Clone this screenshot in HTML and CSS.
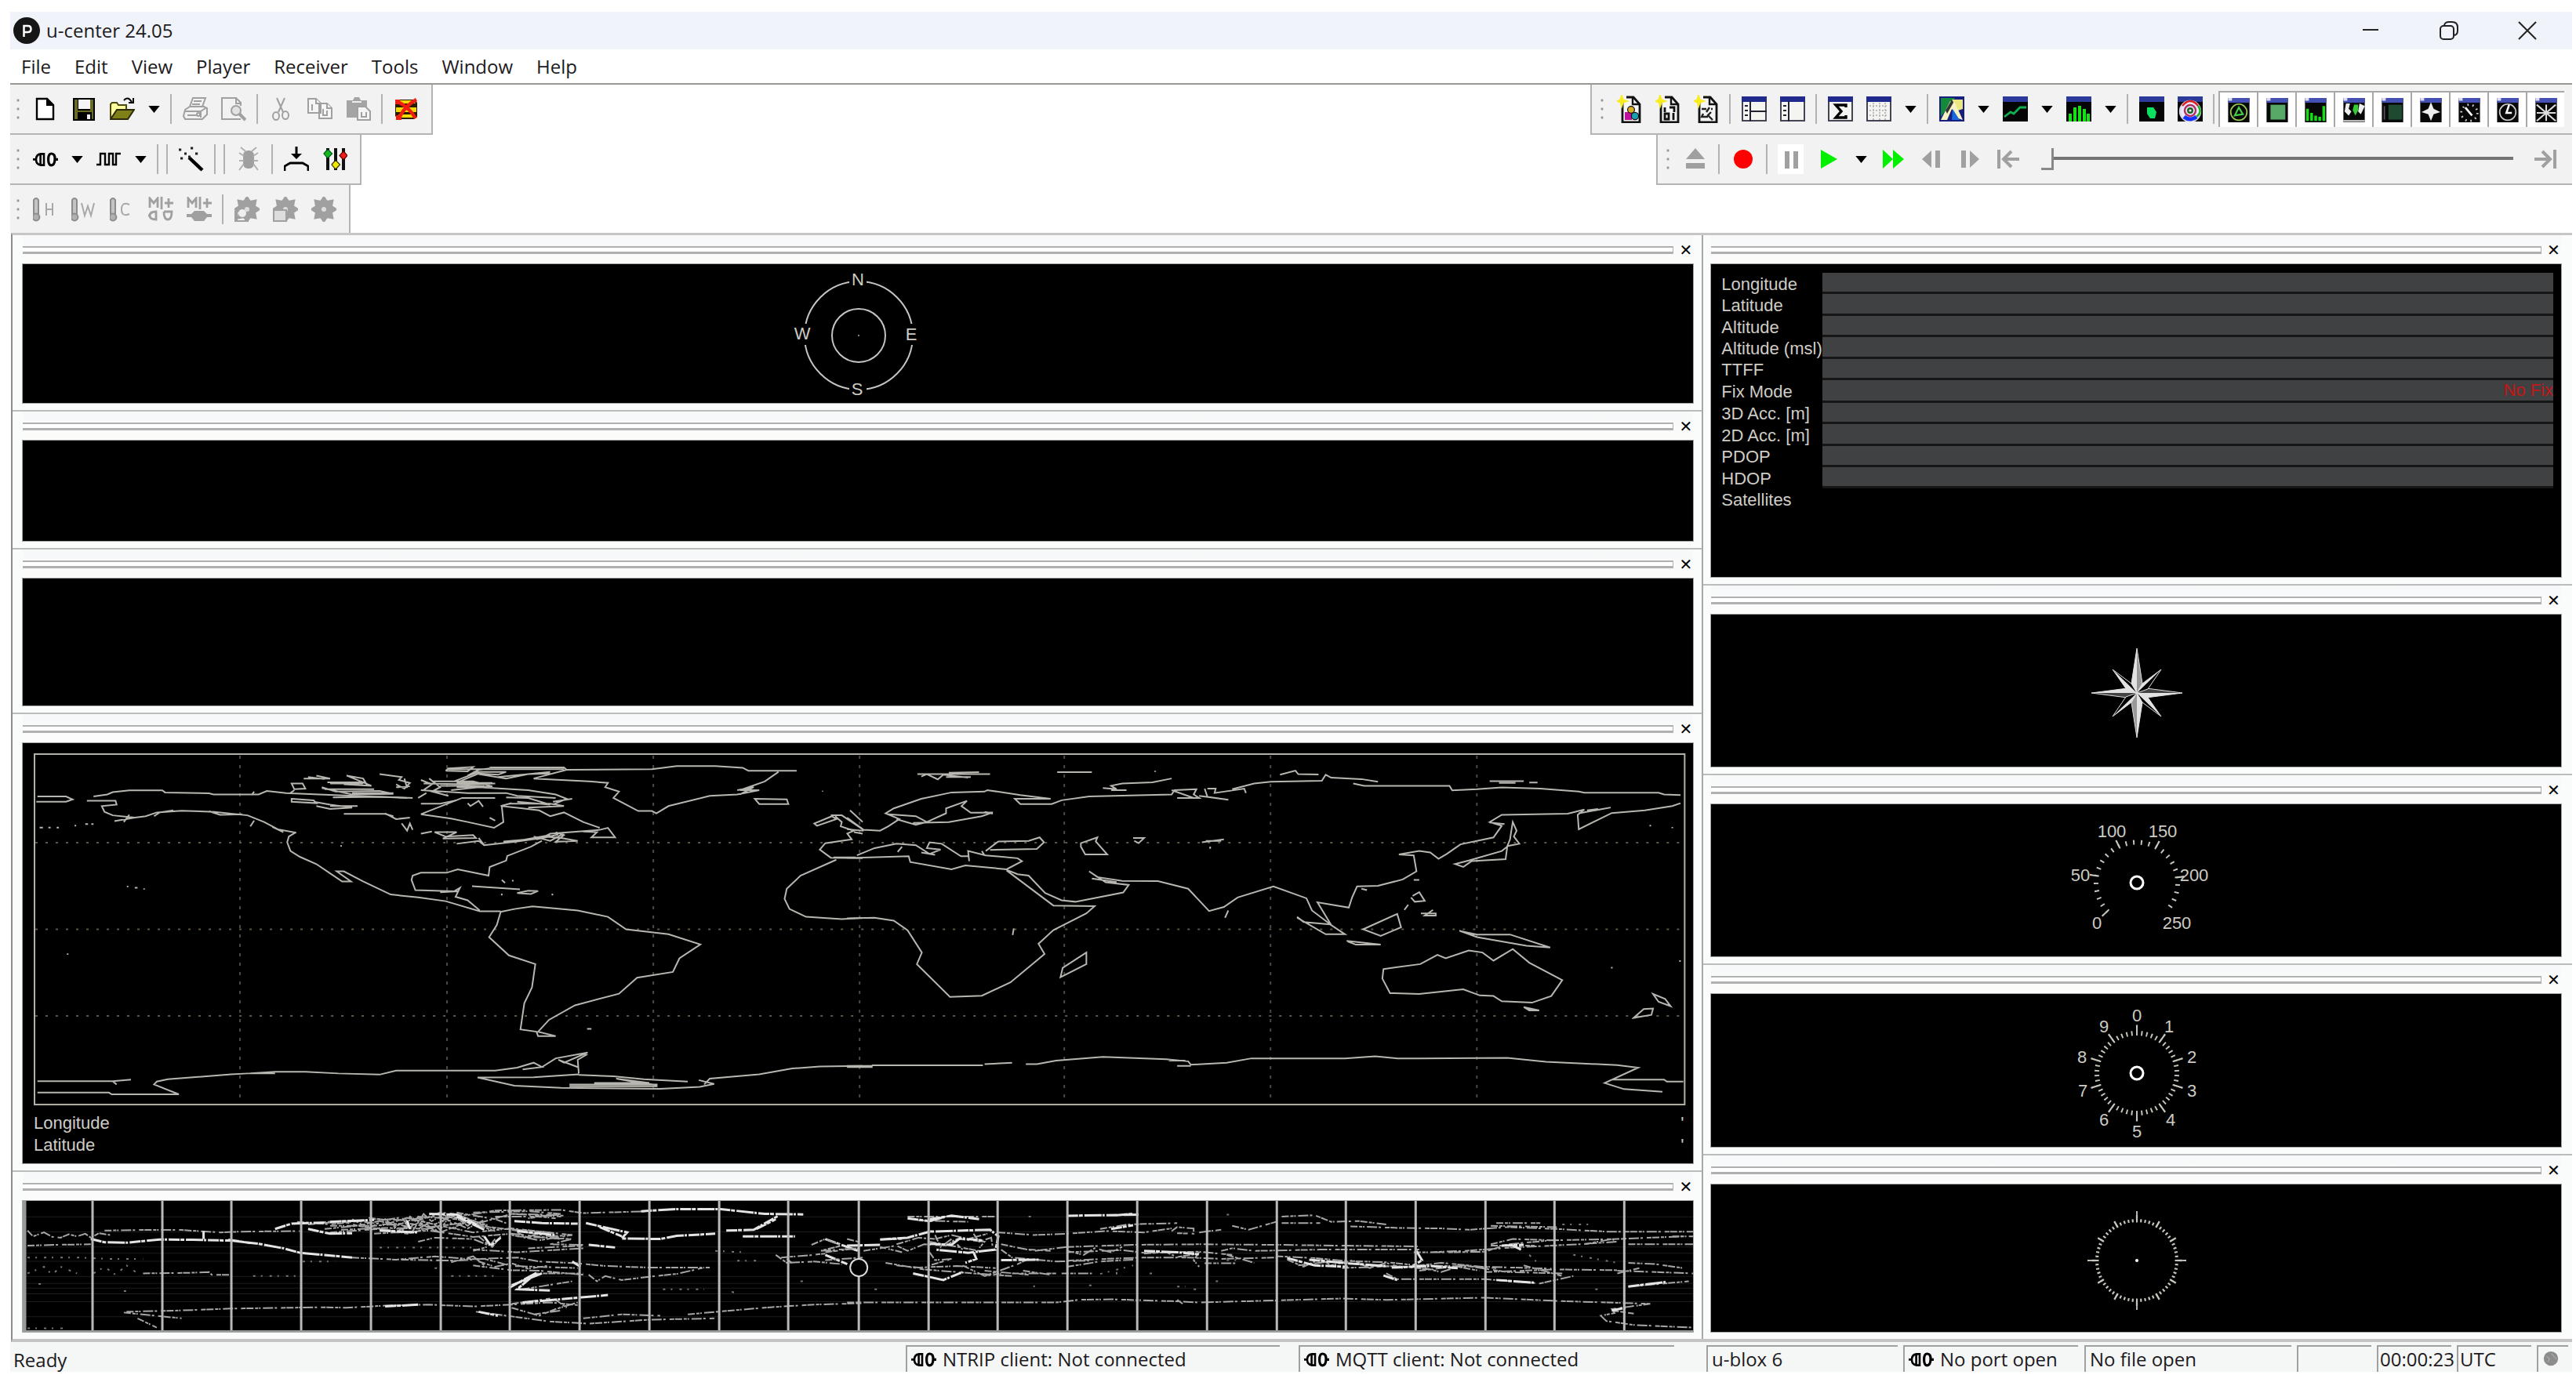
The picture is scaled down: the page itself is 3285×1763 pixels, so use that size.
FILE: index.html
```html
<!DOCTYPE html>
<html lang="en">
<head>
<meta charset="utf-8">
<title>u-center 24.05</title>
<link rel="stylesheet" href="styles.css">
</head>
<body>
<svg class="sprite" aria-hidden="true">
  <symbol id="i-new" viewBox="0 0 16 16"><path d="M2.500 1.500h6.500l4 4v9h-10.500z" fill="#fff" stroke="#000" stroke-width="1.200"/><path d="M9 1.500v4h4" fill="#000" stroke="#000"/></symbol>
  <symbol id="i-save" viewBox="0 0 16 16"><path d="M1 1h14v14.500H1z" fill="#000"/><path d="M2 2h2v7h8V2h2v12.500H2z" fill="#6b6b1e"/><path d="M4.500 2h7.500v6h-7.500z" fill="#f4f4f4"/><path d="M4 10h9v5.500H4z" fill="#000"/><path d="M10 11.500h2v3h-2z" fill="#eee"/></symbol>
  <symbol id="i-open" viewBox="0 0 16 16"><path d="M.5 14V5l1-1h3l1 1.500h5v3" fill="#ffffa0" stroke="#4c4a10"/><path d="M.5 14.500l4-6h11l-4 6z" fill="#808018" stroke="#2c2a08"/><path d="M9 2.500q2.500-3 5 1M15 1v3h-3" fill="none" stroke="#000"/></symbol>
  <symbol id="i-print" viewBox="0 0 16 16"><g fill="none" stroke="#a0a0a0"><path d="M4.500 6.500l2-5.500h8l-2 5.500zM7 3h5M6 5h5M1.500 8.500l3-2h9l2 1v4l-3 3h-11l-1-2zM1.500 9.500h10l3-2M11.500 9.500v4M3 12h6"/><circle cx="10" cy="11.500" r="1"/></g></symbol>
  <symbol id="i-preview" viewBox="0 0 16 16"><path d="M12.500 6V4l-3-3h-9v13.500h12M9.500 1v3.500h3" fill="none" stroke="#a0a0a0"/><circle cx="9.500" cy="9" r="3" fill="#e2e2e2" stroke="#a0a0a0"/><path d="M11.500 11l4 4" stroke="#a0a0a0" stroke-width="2"/></symbol>
  <symbol id="i-cut" viewBox="0 0 16 16"><path d="M5 1l4 9M10 1L6 10" stroke="#a0a0a0" fill="none"/><ellipse cx="4.500" cy="12.500" rx="2" ry="2.500" fill="none" stroke="#a0a0a0"/><ellipse cx="10.500" cy="12" rx="2" ry="2.500" fill="none" stroke="#a0a0a0"/></symbol>
  <symbol id="i-copy" viewBox="0 0 16 16"><g fill="#f6f6f6" stroke="#a0a0a0"><path d="M.5 1.500h5l3 3v6h-8zM7.500 4.500h5l3 3v6.500h-8z"/><path d="M5.500 1.500v3h3M3 5v4M12.500 4.500v3h3M10 8v4h2.500v-3"/></g></symbol>
  <symbol id="i-paste" viewBox="0 0 16 16"><path d="M.5 2.500h4l1-2h3l1 2h4v11H.5z" fill="#a4a4a4"/><path d="M4 3.500h6" stroke="#eee"/><path d="M7.500 6.500h5l3 3v5.500h-8z" fill="#f4f4f4" stroke="#a0a0a0"/><path d="M10 10v3h3v-3" fill="none" stroke="#a0a0a0"/></symbol>
  <symbol id="i-stop" viewBox="0 0 16 16"><path d="M1 4l2-2h10l2 2v9l-2 1.500H3l-2-2z" fill="#2a1c04"/><path d="M3 2.500h9l2 2H2zM1.500 7h13v3h-13zM3 11.500h10v2H3z" fill="#f4d800"/><path d="M2 3q8 4 12 11M14.500 2Q7 6 3 14.500" stroke="#f01c10" stroke-width="2.200" fill="none"/><path d="M1 2h3v3H1zM1.500 12H5v3H1.500z" fill="#f01c10"/></symbol>
  <symbol id="i-plug" viewBox="0 0 16 16"><path d="M7 4v8.500M6.500 4.700H5Q2 5 2 8.200T5 11.800h1.500M4.800 5v6.500M0 8.200h2" fill="none" stroke="#000" stroke-width="1.300"/><path d="M11.800 4.500q-2 0-2 3.700t2 3.700 2.200-3.700-2.200-3.700M14 8.200h2" fill="none" stroke="#000" stroke-width="1.600"/></symbol>
  <symbol id="i-wave" viewBox="0 0 16 16"><path d="M0 11.500h2.500v-7h3v7h2.500v-7h2.500v7h2v-7h3" fill="none" stroke="#000" stroke-width="1.200"/></symbol>
  <symbol id="i-wand" viewBox="0 0 16 16"><path d="M6.500 7l8.500 8" stroke="#000" stroke-width="2.200"/><path d="M0 2h1.600M3.500 4.500H5M7.500 1h1.600M10.500 4.500h1.600M1 7.500h1.600M6 6.500h1.500" stroke="#222" stroke-width="1.500"/></symbol>
  <symbol id="i-bug" viewBox="0 0 16 16"><rect x="4.500" y="2.500" width="7" height="11.500" rx="3" fill="#a0a0a0"/><path d="M6 3L3 .5M10 3l3-2.500M5 6L2 4M5 9H2M5 11l-3 4M11 6l3-2M11 9h3M11 11l3 4" stroke="#b0b0b0" fill="none"/></symbol>
  <symbol id="i-down" viewBox="0 0 16 16"><path d="M8 0v5" stroke="#000" stroke-width="1.500"/><path d="M4.500 4.500h7L8 8z"/><path d="M.5 15.500v-3l3.500-2h8l3.500 2v3" fill="none" stroke="#000" stroke-width="1.400"/></symbol>
  <symbol id="i-sliders" viewBox="0 0 16 16"><path d="M3.500 1v14M8.500 1v14M13.500 1v14" stroke="#111" stroke-width="2"/><path d="M1 4.500l2-2.300h1l2.300 2.300L4 7H3z" fill="#14b81c" stroke="#052" stroke-width=".6"/><path d="M6 11.500l2-2.300h1l2.300 2.300L9 14H8z" fill="#f0e800" stroke="#330" stroke-width=".6"/><path d="M11 5.700l2-2.300h1l2 2.300L14 8h-1z" fill="#ee1c1c" stroke="#500" stroke-width=".6"/></symbol>
  <symbol id="i-th" viewBox="0 0 8 16"><path d="M2.500 11V2q1.500-2 3 0v9" fill="#c4c4c4" stroke="#8c8c8c"/><circle cx="4" cy="13" r="2.200" fill="#b0b0b0" stroke="#8c8c8c"/></symbol>
  <symbol id="i-gear" viewBox="0 0 16 16"><circle cx="8" cy="8" r="5.500" fill="#a0a0a0"/><path d="M8 0l2 3H6zM8 16l2-3H6zM0 8l3-2v4zM16 8l-3-2v4zM2.300 2.300l3.500.7L3 6zM13.700 2.300l-3.500.7L13 6zM2.300 13.700l3.500-.7L3 10zM13.700 13.700l-3.500-.7L13 10z" fill="#a0a0a0" stroke="#a0a0a0"/><circle cx="8" cy="8" r="1.500" fill="#ddd"/></symbol>
  <symbol id="i-doc" viewBox="0 0 16 18"><path d="M3.500 4.500V17.500h11V6l-4-4.500H6" fill="#f6f6f6" stroke="#111" stroke-width="1.400"/><path d="M10 2v4h4" fill="none" stroke="#111" stroke-width="1.200"/><path d="M3 0l1 3 3 1-3 1-1 3-.8-3L0 4l2-1z" fill="#f8ec20" stroke="#f8ec20" stroke-width=".6"/></symbol>
  <symbol id="i-frame" viewBox="0 0 16 16"><path d="M.5.500h15v15H.5z" fill="#f4f4f0" stroke="#445"/><path d="M0 0h16v3.500H0z" fill="#1f2a8c"/></symbol>
  <symbol id="i-dark" viewBox="0 0 16 16"><path d="M0 0h16v16H0z" fill="#050505"/><path d="M0 0h16v3.500H0z" fill="#2c3a9c"/></symbol>
  <symbol id="i-tog" viewBox="0 0 16 18"><path d="M0 0h16v18H0z" fill="#080808"/><path d="M0 0h16v3.500H0z" fill="#4450b4"/><path d="M0 0h3v2H0z" fill="#dde"/></symbol>
  <symbol id="i-caret" viewBox="0 0 16 10"><path d="M0 0h16L8 10z"/></symbol>
</svg>

<div class="app">
<header class="title">
  <svg class="logo" viewBox="0 0 34 34"><circle cx="17" cy="17" r="17" fill="#161616"/><path d="M13.500 25V11h5q4 0 4 4t-4 4h-5" fill="none" stroke="#fff" stroke-width="2.500"/></svg>
  <h1>u-center 24.05</h1>
  <div class="wctl">
    <button aria-label="Minimize"><svg viewBox="0 0 24 24"><path d="M2 11h20" stroke="#222" stroke-width="2"/></svg></button>
    <button aria-label="Restore"><svg viewBox="0 0 24 24"><rect x="1" y="6" width="17" height="17" rx="4" fill="none" stroke="#222" stroke-width="2"/><path d="M6 5q1-4 6-4h4q7 0 7 7v4q0 5-4 6" fill="none" stroke="#222" stroke-width="2"/></svg></button>
    <button aria-label="Close"><svg viewBox="0 0 24 24"><path d="M1 1l22 22M23 1L1 23" stroke="#222" stroke-width="2"/></svg></button>
  </div>
</header>
<nav class="menu"><a href="#">File</a><a href="#">Edit</a><a href="#">View</a><a href="#">Player</a><a href="#">Receiver</a><a href="#">Tools</a><a href="#">Window</a><a href="#">Help</a></nav>

<div class="dock">
  <div class="dock-col">
    <div class="bar" role="toolbar" aria-label="Standard">
      <i class="grip"></i>
      <button aria-label="New"><svg><use href="#i-new"/></svg></button>
      <button aria-label="Save"><svg><use href="#i-save"/></svg></button>
      <button aria-label="Open"><svg><use href="#i-open"/></svg></button>
      <button class="drop" aria-label="Open options"><svg><use href="#i-caret"/></svg></button><i class="sep"></i>
      <button aria-label="Print"><svg><use href="#i-print"/></svg></button>
      <button aria-label="Preview"><svg><use href="#i-preview"/></svg></button><i class="sep"></i>
      <button aria-label="Cut"><svg><use href="#i-cut"/></svg></button>
      <button aria-label="Copy"><svg><use href="#i-copy"/></svg></button>
      <button aria-label="Paste"><svg><use href="#i-paste"/></svg></button><i class="sep"></i>
      <button aria-label="Clear"><svg><use href="#i-stop"/></svg></button>
    </div>
    <div class="bar" role="toolbar" aria-label="Connection">
      <i class="grip"></i>
      <button aria-label="Port"><svg><use href="#i-plug"/></svg></button>
      <button class="drop" aria-label="Port options"><svg><use href="#i-caret"/></svg></button>
      <button aria-label="Baud rate"><svg><use href="#i-wave"/></svg></button>
      <button class="drop" aria-label="Baud options"><svg><use href="#i-caret"/></svg></button><i class="sep"></i><i class="sep"></i>
      <button aria-label="Autobauding"><svg><use href="#i-wand"/></svg></button><i class="sep"></i><i class="sep"></i>
      <button aria-label="Debug"><svg><use href="#i-bug"/></svg></button><i class="sep"></i>
      <button aria-label="Download"><svg><use href="#i-down"/></svg></button>
      <button aria-label="Configure"><svg><use href="#i-sliders"/></svg></button>
    </div>
    <div class="bar last" role="toolbar" aria-label="Actions">
      <i class="grip"></i>
      <button aria-label="Hotstart"><svg viewBox="0 0 16 16"><use href="#i-th" x="-2" width="8" height="16"/><path d="M8.500 4v8M12.500 4v8M8.500 8h4" fill="none" stroke="#a8a8a8"/></svg></button>
      <button aria-label="Warmstart"><svg viewBox="0 0 16 16"><use href="#i-th" x="-2" width="8" height="16"/><path d="M6.500 4l2 8 2-6 2 6 2-8" fill="none" stroke="#a8a8a8"/></svg></button>
      <button aria-label="Coldstart"><svg viewBox="0 0 16 16"><use href="#i-th" x="-2" width="8" height="16"/><path d="M12.500 5q-5-2-5 3t5 3" fill="none" stroke="#a8a8a8"/></svg></button>
      <button aria-label="Message receive"><svg viewBox="0 0 16 16"><path d="M1 7V1l2.500 3L6 1v6M8.500 0v8M10.500 4H16M13 1v6M5 9.500q-4 0-4 2.500t4 2.500zM0 12h1M10 9.500h5q0 5-2.500 5T10 9.500" fill="none" stroke="#a0a0a0" stroke-width="1.400"/></svg></button>
      <button aria-label="Message send"><svg viewBox="0 0 16 16"><path d="M1 7V1l2.500 3L6 1v6M8.500 0v8M10.500 4H16M13 1v6" fill="none" stroke="#a0a0a0" stroke-width="1.400"/><path d="M0 11h3l2-2h6l2 2h3v2h-3l-2 2.500H5L3 13H0z" fill="#a0a0a0"/></svg></button><i class="sep"></i>
      <button aria-label="Load configuration"><svg viewBox="0 0 16 16"><use href="#i-gear"/><circle cx="5" cy="10.500" r="2.500" fill="#eee"/><path d="M0 9h2v6h7v1H0z" fill="#a0a0a0"/></svg></button>
      <button aria-label="Save configuration"><svg viewBox="0 0 16 16"><use href="#i-gear"/><path d="M.5 8.500h8v7h-8z" fill="#ddd" stroke="#a0a0a0"/></svg></button>
      <button aria-label="Generation settings"><svg viewBox="0 0 16 16"><use href="#i-gear"/></svg></button>
    </div>
  </div>
  <div class="dock-col right">
    <div class="bar" role="toolbar" aria-label="Views">
      <i class="grip"></i>
      <button aria-label="Packet console"><svg class="tall" viewBox="0 0 16 18"><use href="#i-doc"/><path d="M5 11h4.500v5H5z" fill="#c010a0"/><circle cx="11.500" cy="13.500" r="2.300" fill="#18a0b0" stroke="#111" stroke-width=".6"/><circle cx="9" cy="9.500" r="2.200" fill="#d8b020" stroke="#111" stroke-width=".6"/></svg></button>
      <button aria-label="Binary console"><svg class="tall" viewBox="0 0 16 18"><use href="#i-doc"/><path d="M6 8v3M9 8h3v3M6 12h2.500v3.500H6zM11.500 11.500v4.500" fill="none" stroke="#111" stroke-width="1.400"/></svg></button>
      <button aria-label="Text console"><svg class="tall" viewBox="0 0 16 18"><use href="#i-doc"/><path d="M5 9h3M10 8l-2 3M6 12l-1 2h4M11 11l-2 2 3 3M11 9h1" fill="none" stroke="#222" stroke-width="1.200"/></svg></button><i class="sep"></i>
      <button aria-label="Messages view"><svg viewBox="0 0 16 16"><use href="#i-frame"/><path d="M5.500 3v13M5.500 9.500H16M2 6h2M2 9h2M2 12h2" stroke="#223" fill="none"/></svg></button>
      <button aria-label="Configuration view"><svg viewBox="0 0 16 16"><use href="#i-frame"/><path d="M5.500 3v13M2 6h2M2 9h2M2 12h2" stroke="#223"/></svg></button><i class="sep"></i>
      <button aria-label="Statistic view"><svg viewBox="0 0 16 16"><use href="#i-frame"/><path d="M11.500 7V5.500H5l3.500 4L5 13.500h6.500V12" fill="none" stroke="#000" stroke-width="1.700"/></svg></button>
      <button aria-label="Table view"><svg viewBox="0 0 16 16"><use href="#i-frame"/><path d="M2 6h12M2 9h12M2 12h12M4.500 4v11M8.500 4v11M12 4v11" stroke="#bbb" stroke-dasharray="1 1"/></svg></button>
      <button class="drop" aria-label="Table options"><svg><use href="#i-caret"/></svg></button><i class="sep"></i>
      <button aria-label="Map view"><svg viewBox="0 0 16 16"><path d="M0 0h16v16H0z" fill="#171f80"/><path d="M1 1h9L1 13z" fill="#128a3a"/><path d="M8 2h7v6l-3 1z" fill="#ece680"/><path d="M1 15L7 3l3 1 5 11-3-1-4-6-3 7z" fill="#f7f3c0"/><path d="M4 9l4-7 1 2-4 7z" fill="#333"/><path d="M8.500 8l4.500 7H8z" fill="#1868e0"/></svg></button>
      <button class="drop" aria-label="Map options"><svg><use href="#i-caret"/></svg></button>
      <button aria-label="Chart view"><svg viewBox="0 0 16 16"><use href="#i-dark"/><path d="M1 13l4-3 2 1 4-4h4" fill="none" stroke="#10b050" stroke-width="1.400"/></svg></button>
      <button class="drop" aria-label="Chart options"><svg><use href="#i-caret"/></svg></button>
      <button aria-label="Histogram view"><svg viewBox="0 0 16 16"><use href="#i-dark"/><path d="M2.500 16v-5M5.500 16V7M8.500 16V6M11.500 16V8M14 16v-5" stroke="#16e016" stroke-width="2"/></svg></button>
      <button class="drop" aria-label="Histogram options"><svg><use href="#i-caret"/></svg></button><i class="sep"></i>
      <button aria-label="Camera view"><svg viewBox="0 0 16 16"><use href="#i-dark"/><path d="M5 7h4l2 3-1 4H7l-2-3z" fill="#0be060"/></svg></button>
      <button aria-label="Deviation map"><svg viewBox="0 0 16 16"><use href="#i-dark"/><g fill="none" stroke-width="1.200"><circle cx="8" cy="9.500" r="6.500" fill="#ece8ff" stroke="#d8d8e8"/><path d="M3 6q5-6 10 0" stroke="#e02020"/><path d="M13 6q3 4-1 7" stroke="#20b020"/><circle cx="8" cy="9" r="3.500" stroke="#b03060"/><circle cx="8" cy="9" r="1.400" stroke="#206020"/><path d="M4 13q4 3 8 0" stroke="#1430ff" stroke-width="2.500"/></g></svg></button><i class="sep"></i>
      <button class="on" aria-label="Sky view"><svg class="tog" viewBox="0 0 16 18"><use href="#i-tog"/><circle cx="8" cy="10.500" r="6" fill="none" stroke="#9c5"/><path d="M5 13l3-6 3 5z" fill="none" stroke="#4c4" stroke-width="1.300"/></svg></button>
      <button class="on" aria-label="Satellite level"><svg class="tog" viewBox="0 0 16 18"><use href="#i-tog"/><path d="M3 5h11v11H3z" fill="#58a868"/></svg></button>
      <button class="on" aria-label="Signal history"><svg class="tog" viewBox="0 0 16 18"><use href="#i-tog"/><path d="M2 17V8M5 17v-6M8 17v-4M11 17v-3M14 17V6" stroke="#16e016" stroke-width="2"/></svg></button>
      <button class="on" aria-label="World position"><svg class="tog" viewBox="0 0 16 18"><use href="#i-tog"/><path d="M2 4h3L4 8l2 2-2 3-3-3zM12 4l4 2-3 6-2-2z" fill="#eee"/><path d="M8 5h3v4l-2 4-2-4z" fill="#3c3"/><path d="M0 17h16" stroke="#bbb" stroke-width="1.500"/></svg></button>
      <button class="on" aria-label="Data view"><svg class="tog" viewBox="0 0 16 18"><use href="#i-tog"/><path d="M5 5h10v11H5z" fill="#1d4a30"/><path d="M2 6v10" stroke="#555"/></svg></button>
      <button class="on" aria-label="Compass"><svg class="tog" viewBox="0 0 16 18"><use href="#i-tog"/><path d="M8 3l2 5 5 2.500-5 1.500-2 5-2-5-5-1.500L6 8z" fill="#eee"/></svg></button>
      <button class="on" aria-label="Speedometer"><svg class="tog" viewBox="0 0 16 18"><use href="#i-tog"/><circle cx="8" cy="11" r="6" fill="none" stroke="#ccc" stroke-width="1.600" stroke-dasharray="1 2.800"/><path d="M5 7l5 6" stroke="#fff" stroke-width="1.500"/></svg></button>
      <button class="on" aria-label="Clock"><svg class="tog" viewBox="0 0 16 18"><use href="#i-tog"/><circle cx="8" cy="10.500" r="6" fill="none" stroke="#ccc"/><path d="M9 5l-2 6h4" stroke="#fff" fill="none" stroke-width="1.500"/></svg></button>
      <button class="on" aria-label="Altimeter"><svg class="tog" viewBox="0 0 16 18"><use href="#i-tog"/><path d="M1 5l14 12M15 5L1 17M8 5v12M1 11h14" stroke="#ddd" stroke-width="1.200"/></svg></button>
    </div>
    <div class="bar" role="toolbar" aria-label="Player">
      <i class="grip"></i>
      <button aria-label="Eject"><svg viewBox="0 0 16 16"><path d="M2 8l6-7 6 7zM2 10.500h12v3.500H2z" fill="#a0a0a0"/></svg></button><i class="sep"></i>
      <button aria-label="Record"><svg viewBox="0 0 16 16"><ellipse cx="8" cy="8" rx="6" ry="6" fill="#f00"/></svg></button><i class="sep"></i>
      <button class="lit" aria-label="Pause"><svg viewBox="0 0 16 16"><path d="M4 3h3v11H4zM9.500 3h3v11h-3z" fill="#a0a0a0"/></svg></button>
      <button aria-label="Play"><svg viewBox="0 0 16 16"><path d="M2.500 2l10.500 6-10.500 6z" fill="#00f000"/></svg></button>
      <button class="drop" aria-label="Play options"><svg><use href="#i-caret"/></svg></button>
      <button aria-label="Fast forward"><svg viewBox="0 0 16 16"><path d="M1.500 2l6.500 6-6.500 6zM8 2l7 6-7 6z" fill="#00f000"/></svg></button>
      <button aria-label="Step back"><svg viewBox="0 0 16 16"><path d="M8 2.500v11L2 8zM10.500 2.500h3v11h-3z" fill="#a0a0a0"/></svg></button>
      <button aria-label="Step forward"><svg viewBox="0 0 16 16"><path d="M8 2.500v11L14 8zM2.500 2.500h3v11h-3z" fill="#a0a0a0"/></svg></button>
      <button aria-label="First"><svg viewBox="0 0 16 16"><path d="M2 2v12M15 8H5M10 3L5 8l5 5" fill="none" stroke="#a0a0a0" stroke-width="2"/></svg></button>
      <input class="seek" type="range" min="0" max="100" value="0" aria-label="Position">
      <button aria-label="Last"><svg viewBox="0 0 16 16"><path d="M14 2v12M1 8h10M6 3l5 5-5 5" fill="none" stroke="#a0a0a0" stroke-width="2"/></svg></button>
    </div>
  </div>
</div>

<main class="work">
  <div class="panes left">
    <section class="pane"><div class="cap"><i></i><button aria-label="Close">✕</button></div>
      <div class="view"><svg class="dial" width="192" height="174" viewBox="-97 -89 192 174"><g fill="none" stroke="#c4c4c4" stroke-width="2"><circle r="69"/><circle r="34"/></g><g fill="#000"><path d="M-12-82h22v22h-22zM-12 58h22v22h-22zM-84-15h24v27h-24zM58-15h20v27h-20z"/></g><circle r="1" fill="#aaa"/><g class="lbl"><text x="-1" y="-64">N</text><text x="67" y="6">E</text><text x="-2" y="76">S</text><text x="-72" y="5">W</text></g></svg></div></section>
    <section class="pane"><div class="cap"><i></i><button aria-label="Close">✕</button></div><div class="view"></div></section>
    <section class="pane"><div class="cap"><i></i><button aria-label="Close">✕</button></div><div class="view"></div></section>
    <section class="pane"><div class="cap"><i></i><button aria-label="Close">✕</button></div>
      <div class="view map">
        <svg viewBox="0 0 2130 471" preserveAspectRatio="none">
          <rect x="15" y="14" width="2104" height="447" fill="none" stroke="#b4b2a8" stroke-width="2"/>
          <path d="M277 16v444M541 16v444M804 16v444M1067 16v444M1328 16v444M1591 16v444M1854 16v444" stroke="#4a4842" stroke-width="2" stroke-dasharray="4 8"/>
          <path d="M16 127h2102M16 237.500h2102M16 348h2102" stroke="#5e5646" stroke-width="2" stroke-dasharray="3 10"/>
          <g class="coast" transform="translate(-29 -27) scale(.7015 .3699)">
            <path d="M68 257H120L132 267 120 275H66M158 272H210L212 285 185 290 190 310 205 322 245 330 208 342M235 320L225 345M245 330L265 325 285 312 330 306 390 310 450 322 480 345 505 370 538 382M455 360L462 340M280 325L290 312 315 305M380 308L400 320 440 318M495 362L515 380"/>
            <path d="M170 257L195 250 205 242 235 236H295L300 243 380 246 388 250H470L485 238 520 245 580 250 690 258 750 262M458 250L462 240M528 245L535 235"/>
            <path d="M538 380L525 395 522 415 528 445 545 465 575 490 600 522 622 550 638 550 612 515 625 515 660 550 710 595 760 605 810 618 872 653H910"/>
            <path d="M872 650L850 615 828 603 836 572 825 584 755 580 748 545 750 530 765 520H812L832 508 888 530 890 500 920 478 922 462 965 430 985 410M832 584L800 587"/>
            <path d="M530 212H550L555 230 535 232ZM552 195H600L575 185M560 190L590 197M595 208H665L625 215 675 220 630 185 660 195 668 220M585 225L610 240 690 238 715 248 640 250 585 228M530 265L570 270 575 280 530 275ZM570 275L600 285 640 295 600 300 575 290M600 290H650M625 317H700L715 325M700 315L720 335 745 330M730 350L740 375 745 350 750 372M605 260L690 258 740 262M600 212H660M590 232H680M640 245H715"/>
            <path d="M690 180L730 190 725 200 745 210 735 230 720 215M735 195L740 228M720 225L745 222M765 200L785 215 770 235M780 195L800 225 785 240 815 255M765 235L850 245M770 212L850 215 900 212M785 205H860L895 222 830 225M810 168L815 160 860 155 850 170 810 168M890 157H1025L1030 165M860 172L920 172 905 182 870 178 835 205M850 185L870 165 890 160M905 190L1000 172M870 180L920 195 960 180 1000 178M760 262L775 245M820 235L870 225 960 235 1010 250 1030 265 1005 285M845 245L920 245 940 255 1010 262M920 260L960 262 1000 285 940 275M1005 275L1040 265M925 282H1000L1025 290 960 295M765 282H800L830 270M830 210H895M800 220H880M815 163H1025M825 205L870 172"/>
            <path d="M765 318L840 262 900 262M765 318L820 333 850 345 898 365 915 345 912 290 950 298 980 305 1000 325 1025 312 1060 345 1090 365M850 280L855 290 870 272 878 292M890 330L900 340M910 290L930 280"/>
            <path d="M765 385L785 378M790 380L810 395 860 390 865 400 805 402 830 380ZM830 420L870 410 880 425 940 412 985 400 1000 385 1090 372 1105 365 1118 398H1075L1085 380 1060 378M985 395L1020 400 1050 410 1010 413 1025 390 1010 380M870 400L880 425M915 412L960 405M970 395L1000 410 1025 385M940 410L1000 390M975 405L1015 388"/>
            <path d="M1030 165L1185 163 1230 152H1300L1350 158 1360 168H1448M1415 172L1390 205 1345 235 1380 235 1340 250 1290 255 1215 290 1193 315 1185 307H1160L1115 262 1125 240 1100 225 1105 210 1070 205 970 195 1030 165M1345 250L1370 225 1340 235M1372 265L1430 267 1433 283H1380Z"/>
            <path d="M858 566L945 577M940 590L960 582 978 583 965 593ZM912 545L918 555M932 545V550M912 592V598M1004 592V598M72 364H78M88 364H92M103 364H107M137 355V360M155 352H160M166 352H170M232 565V570M245 572H250M262 574V578M123 798V803M1067 1058H1075M1495 237V240M620 425V430"/>
            <path d="M910 655L935 645 968 636 1050 650 1105 672 1138 715 1215 732 1273 767 1235 815 1223 862 1158 882 1125 937 1045 977 998 1027 978 1068 1010 1083H978L975 1068 946 1060 953 970 967 915 973 835 925 805 889 742 903 700Z"/>
            <path d="M68 1239H205L212 1250M205 1239L238 1233M68 1278H198L203 1284H325L280 1250 285 1240 305 1232 420 1215 450 1212 500 1206H555L615 1212 690 1216 720 1202H900L940 1192 970 1175 985 1190 950 1198M985 1190L1010 1160 1068 1140 1025 1175 1015 1165M1068 1145L1050 1165 1052 1212M1015 1165L1050 1190M455 1212H500M1052 1215L970 1225 868 1226 935 1254 1020 1262 1200 1265 1272 1258 1298 1248 1270 1235M1052 1217L1115 1222 1170 1232 1250 1240M1035 1250H1195M1080 1245H1180L1120 1230 1150 1240 1195 1252M1035 1256H1195M1280 1250L1290 1230 1380 1215 1440 1195 1490 1188 1568 1186"/>
            <path d="M1545 305L1568 345M1552 380L1568 385M1510 322H1530L1568 370M1485 358L1480 350 1512 325 1520 335ZM1518 325L1530 345 1528 360 1552 375 1540 385 1548 405 1500 418 1490 440 1510 468 1568 470M1520 475L1455 530 1430 575 1426 610 1435 645 1465 672 1530 680 1568 676M1515 467H1555"/>
          </g>
          <g class="coast" transform="translate(1051 -27) scale(.7015 .3699)">
            <path d="M128 180H260M135 188L145 180 165 198 175 182 220 192M185 175L240 173M180 190H225M382 173H445M465 228L490 232 480 220 500 212 555 208 590 195M480 235H508M787 182L815 168 820 180 857 181"/>
            <path d="M0 370L30 375M0 330L30 372 60 375 75 360 95 335 70 315 85 298 135 265 190 243 250 240 255 235 315 252 370 265H305L315 283H372L390 270 440 257 590 250 595 235 635 232 630 250 640 262H600M590 235L630 262M650 230L655 258 693 268 640 255M655 230H670L668 245 722 230 725 245M700 232L740 212 770 206 863 203 870 182 880 192 935 197 965 206M920 212L940 220H1095L1100 236 1145 232 1190 226 1260 230 1330 240 1340 244H1475L1485 250 1515 252M1168 204H1230M1240 209H1255M1185 210H1215"/>
            <path d="M75 318L125 325 145 345 125 355 90 335M145 345L180 315 180 298 218 272 208 290 225 313 265 312 245 325 185 345 120 348M250 310L265 316"/>
            <path d="M0 468H18L112 463 115 483 190 508 215 495 290 508 318 480 310 470 252 460 220 445 222 480M18 460L50 435 90 420 125 425 150 455 170 440 145 435 150 415 172 420 207 463H222M135 450L160 458M100 430L92 448M252 445L275 412 330 410 350 398 358 415 345 438 260 441M250 460L245 445"/>
            <path d="M290 510L310 525 330 530 360 590 390 615 415 620 502 588 512 562 470 553 440 515 455 535 500 548 565 549 620 575 658 652 685 638 710 605 775 567 835 608 845 650 880 700 855 622 912 640 918 605 927 567 965 565 1010 543 1035 515 1030 460 1003 457 1040 445 1060 450 1075 472 1090 455 1115 422 1175 398 1190 358 1168 345 1190 320 1310 316 1340 302 1328 320 1330 370 1390 314 1450 305 1500 290 1515 280M290 512L375 633 450 635 435 660 375 718 348 765 359 800 297 898 245 944 187 948 127 835 136 795 110 718 85 685 50 675 0 677M1168 347L1195 352M445 540L490 552"/>
            <path d="M425 418L455 398 452 412 473 457H433L425 430ZM520 400L540 400 530 418 522 410M645 415L685 405M652 410L680 410M660 430V437M687 675L693 650M303 712L301 735M388 880L392 848 435 795 435 835ZM1030 545H1040M1028 600L1040 587 1050 617 1032 620 1025 605M1020 630L1013 648M1043 660H1070V668H1050L1065 648M938 715L1000 662 1007 708 970 738ZM818 672L830 690 878 698 905 732H870L818 675M908 755L970 768H925L910 757M935 575L945 580"/>
            <path d="M1113 720L1145 733H1205L1278 778 1235 772 1145 742ZM1115 722L1140 735M975 852L1042 835 1073 803 1088 815 1130 788 1155 795 1175 823 1210 783 1240 830 1300 890 1280 945 1245 968 1190 963 1175 945 1150 943 1120 922 1040 938 987 935 973 885ZM1230 983L1258 995H1240ZM1465 938L1487 955 1497 980 1475 965ZM1430 1020L1448 990 1465 988 1462 1010ZM1390 845V850M1514 822V827M1460 355V360M1500 362V366M560 168V172"/>
            <path d="M1210 345L1217 375 1212 395 1222 420 1200 428 1205 405 1207 380ZM1105 490L1130 478 1190 445 1200 430 1197 473 1135 480 1120 500ZM1330 315L1388 295M1345 305L1365 300"/>
            <path d="M0 1186H45V1190H0M45 1184H247M250 1180L300 1175M325 1180H345L380 1168 465 1155 580 1163 620 1170 625 1182 690 1175 735 1160H905L960 1153 1000 1160H1040L1200 1158 1270 1172 1400 1183 1438 1192 1377 1245 1412 1266 1482 1275M1390 1233H1485L1490 1240H1520M600 1186H625M585 1168H615"/>
          </g>
        </svg>
        <dl><div><dt>Longitude</dt><dd>'</dd></div><div><dt>Latitude</dt><dd>'</dd></div></dl>
      </div></section>
    <section class="pane"><div class="cap"><i></i><button aria-label="Close">✕</button></div>
      <div class="view strip">
        <svg viewBox="0 0 2130 165" preserveAspectRatio="none">
          <path d="M0 20H2130M0 39H2130M0 58H2130M0 66H2130M0 76H2130M0 95H2130M0 104H2130M0 110H2130M0 117H2130M0 127H2130M0 146H2130" stroke="#1d1d1d"/>
          <g class="noise" transform="translate(-29 -52) scale(.7015 .3333)">
            <path d="M190 268L250 266 330 266 400 275 440 272 545 270M50 268L60 290 80 275 95 292 110 295 125 282 140 290 155 280 165 295 180 278 200 285M50 325L100 322 165 320M640 370L680 374 720 378 790 366 860 376 940 370 980 385 1050 392 1100 402 1180 408 1290 408"/>
            <path d="M540 235L600 245 680 225 760 230 800 200 850 210 900 192 1020 190 1060 202 1180 195M560 245L640 230 700 245 740 220 790 245 830 205 870 240 930 205 1020 215M590 262L650 250 720 270 760 240 800 275 850 235 900 270M600 275L690 262 740 280 800 250 860 275 930 260 1040 285M700 235L760 262 800 215 850 260 880 228M680 280L780 268 860 292 930 280 1020 300M760 215L830 225 870 250 920 262 1000 275M750 270L770 205 800 265 820 205 850 250 870 215M640 225L670 260 700 225 730 275 745 215 770 245"/>
            <path d="M580 238L620 232 650 250 690 232 720 250 750 225 790 215M600 250H680L740 240 780 255 840 240M620 265L700 258 780 262M790 205L850 225 890 250M810 215L860 235 900 262M830 200L900 225 920 240M860 200L960 195 1020 205 960 222M670 220L700 228 730 218 745 262 760 215 790 270 810 220 830 262M900 215H980L1010 222M930 205L1000 208 1025 212"/>
            <path d="M760 310L790 295 860 300 895 330 910 290M940 290L1040 300 1000 320 1060 322M860 340L940 350 1060 335M930 265L1000 290 1040 285 980 305 930 285M870 290L890 325 900 300M730 378L830 382 880 375 930 402 1050 410M860 400L930 418 980 420 1060 435M820 388L860 365 880 400M930 480L975 430 1060 430M950 490L1010 470 1040 460M1070 435L1085 460 1100 440 1130 455 1200 438 1230 432 1280 408M860 345L885 330M960 335L1060 325M870 385L900 405 930 392 960 412 1000 400M940 275L960 295 985 270 1010 300"/>
            <path d="M230 575L330 570 420 563 590 558 630 560 700 552 780 548 860 555 930 548 1000 540 1050 550M225 578L330 600M250 600L285 635M865 575L920 590 1000 612 1070 620 1180 605 1300 600M1060 600L1130 585 1200 590M1250 585L1330 570 1400 558 1480 548 1568 543M930 560L980 590 1010 565 1050 540M970 585L1020 570M1010 530L1030 560M930 545L1000 525"/>
            <g class="solid"><path d="M165 300L190 312 230 314 290 302 350 303 420 306 470 318 515 335 545 352 640 370M370 270V300M415 303L455 315M500 262L530 242 590 238M560 262L600 280 640 278M1065 240L1140 275 1130 298 1200 300 1230 288 1300 280M1090 255L1130 290M1320 268L1370 265 1415 212M935 232L985 240 1050 242M925 485L975 428 940 490 1000 495M930 475L985 430M700 555L760 548M1165 195L1230 187 1310 187 1390 205 1460 207M1500 300L1560 345M1375 262L1410 225M1350 290H1445M1070 322L1118 332M950 540L1105 512M1040 385L1055 405M870 575L905 590M1500 360L1540 395M600 235L680 228M690 268L760 275M780 205L830 208 870 250M830 215L880 265M740 230L745 262M880 290L892 325 910 295M940 270L1010 285"/></g>
            <path class="fine" d="M50 430L80 405 95 435 110 405 140 430M170 430L190 405 210 435 230 400 250 430M50 370H140L200 375H260M1205 490H1280M1330 500L1340 505M1455 460H1462M1300 345L1350 350M1340 382H1375M70 470H78M225 497H232M50 638H120M790 410H800M460 440H550M690 332H860M550 385H610M820 440H900"/>
            <path d="M260 430L340 428 380 425 385 435 420 435M1410 360L1430 390 1480 385 1530 395M1420 370L1470 362 1500 355M1475 322L1500 300 1530 325 1490 345 1560 335 1500 350M1500 380L1568 370M1430 375L1440 392"/>
          </g>
          <g class="noise" transform="translate(1051 -52) scale(.7015 .3333)">
            <path d="M110 215H270M130 230L220 235M275 275L340 285 400 280 470 270 540 275 590 260M460 262L510 245 600 240M590 270L600 255 630 260 630 280 600 278M640 275L680 265M700 250L730 265 780 235M790 215L850 210 880 235 930 232 980 245M790 240L860 240M915 252L1000 258 1080 260 1130 265 1200 255 1290 262 1380 272 1538 272"/>
            <path d="M30 345L90 325 110 345 140 320 180 325 200 300 250 310 240 335M90 320L130 295 160 300 190 285 220 300 255 280M100 350L60 330M150 310L240 345M160 285L170 330 190 300 210 340M230 280L240 310 262 295 265 335M90 400L130 408 200 402 270 410M150 350L160 380 190 375 150 400M70 390L140 415 230 430 300 440M280 320L340 345 400 330M280 340L300 370 380 385 440 382M250 440L290 410 310 395 330 375M330 340L370 345M210 400L250 440 280 430"/>
            <path d="M400 330L520 322 640 320 780 322 900 325 1040 328M400 350L500 342 540 352 640 348 700 360M400 382L470 375 540 370 620 370 680 375 780 370M390 430L445 430M400 405L460 385 520 378M400 345L430 360 450 335 480 350 500 330M640 350L630 380 640 405M680 345L700 335 740 345 860 340 1040 340M690 360L740 390M650 392H710M540 355L580 350 600 368 640 355"/>
            <path d="M780 365L850 372 900 382 980 388 1040 400 1160 405 1280 412M820 400L880 385 950 400 1020 405 1080 390 1180 410M900 410L1000 402 1060 415M800 378L830 405 860 375 880 400 920 380 950 410 980 390 1010 410M1030 350L1100 350 1160 348 1200 320 1280 305 1400 300 1520 290M1060 350L1120 345 1210 332 1330 320 1400 310M980 430L1000 452 1160 452 1260 468 1320 440M1160 425L1290 415 1400 418M1040 420L1120 400 1200 425 1300 430M1230 400L1300 440M1170 250L1290 255M1180 240H1260M1170 325H1250M1170 320L1210 300 1290 305M1050 410L1080 425 1110 405 1150 420"/>
            <path d="M1340 320L1390 300 1400 310M1420 390L1470 395 1520 410M1420 320H1538M1400 420L1538 430M1420 480L1530 460M1500 290H1538M1400 430L1440 410M0 300L20 310M250 420L330 435M320 420L370 435M300 430H380"/>
            <path d="M0 540H380L420 530 480 528 590 535 640 540 850 528 900 525 980 530 1160 522 1300 535 1460 545M1460 545L1390 565 1395 580 1370 590 1380 610 1430 625 1538 635M600 530L610 545M1390 570L1430 582"/>
            <g class="solid"><path d="M60 302L110 295 150 272 260 265 275 290 270 340 220 352 160 340M62 302L100 298M400 212L530 208M490 210L520 205M110 222L150 232 180 215M150 225L190 212 240 225M1035 345L1045 380 1030 400M800 372L850 400 910 405M975 438L1000 455M1180 455L1250 465M120 430L175 455 210 425M230 350L235 375 215 390M1210 325L1225 340M0 325L60 322M1420 480L1490 462M1390 570L1415 560M150 318L190 322 205 298 245 305M540 345L600 350 640 358M840 378L910 392 980 402M990 408L1060 402 1110 410M280 380L350 378M480 262L520 248M1190 325L1230 322"/></g>
            <path class="fine" d="M460 432L520 400M490 425V440M600 480H615M630 490H640M340 475V482M50 490H56M690 208H695M330 215H335M440 475H450M670 460H676M1300 245H1350M1240 360L1260 400M1320 360L1400 390M1360 490H1365M550 430H560M690 380H720"/>
          </g>
          <path d="M2 0V165" stroke="#999" stroke-width="5"/>
          <path d="M89 0V165M178 0V165M266 0V165M355 0V165M444 0V165M533 0V165M621 0V165M710 0V165M799 0V165M888 0V165M976 0V165M1066 0V165M1155 0V165M1243 0V165M1332 0V165M1421 0V165M1510 0V165M1599 0V165M1687 0V165M1776 0V165M1865 0V165M1953 0V165M2042 0V165" stroke="#b9b9bb" stroke-width="3"/>
          <path d="M0 164H2130" stroke="#999" stroke-width="2"/>
          <circle cx="1066" cy="84" r="11" fill="#000" stroke="#ddd" stroke-width="2"/>
        </svg>
      </div></section>
  </div>
  <div class="panes side">
    <section class="pane"><div class="cap"><i></i><button aria-label="Close">✕</button></div>
      <div class="view data"><table>
        <tr><th>Longitude</th><td></td></tr><tr><th>Latitude</th><td></td></tr><tr><th>Altitude</th><td></td></tr><tr><th>Altitude (msl)</th><td></td></tr><tr><th>TTFF</th><td></td></tr><tr><th>Fix Mode</th><td>No Fix</td></tr><tr><th>3D Acc. [m]</th><td></td></tr><tr><th>2D Acc. [m]</th><td></td></tr><tr><th>PDOP</th><td></td></tr><tr><th>HDOP</th><td></td></tr><tr><th>Satellites</th><td class="none"></td></tr>
      </table></div></section>
    <section class="pane"><div class="cap"><i></i><button aria-label="Close">✕</button></div>
      <div class="view"><svg class="dial" width="192" height="174" viewBox="-97 -90 192 174"><g stroke="#ddd"><path d="M0-57L7-12 0 0-7-12zM0 57L7 12 0 0-7 12z" fill="#999"/><path d="M-58 0L-12-6 0 0-12 6zM58 0L12-6 0 0 12 6z" fill="#444"/><path d="M31-30L7-12 0 0 14-5zM-31 30L-7 12 0 0-14 5zM-31-30L-14-6 0 0-7-12zM31 30L14 6 0 0 7 12z" fill="#000"/></g><path d="M-31-30L-14-5 0 0zM31-30L7-12 0 0zM31 30L14 5 0 0zM-31 30L-7 12 0 0zM0-57L0 0-7-12zM0 57L0 0 7 12zM58 0H0L12 6zM-58 0H0L-12-6z" fill="#e2e2e2"/></svg></div></section>
    <section class="pane"><div class="cap"><i></i><button aria-label="Close">✕</button></div>
      <div class="view"><svg class="dial" width="192" height="174" viewBox="-97 -90 192 174"><g fill="none" stroke="#c8c6bc"><path d="M-37 37A52 52 0 1 1 37 37" pathLength="250" stroke-width="6" stroke-dasharray="2 8"/><path d="M-40 40A56 56 0 1 1 40 40" pathLength="250" stroke-width="10" stroke-dasharray="2 48"/><circle r="8" stroke="#fff" stroke-width="3"/></g><g class="lbl"><text x="-32" y="-58">100</text><text x="33" y="-58">150</text><text x="-72" y="-2">50</text><text x="73" y="-2">200</text><text x="-51" y="59">0</text><text x="51" y="59">250</text></g></svg></div></section>
    <section class="pane"><div class="cap"><i></i><button aria-label="Close">✕</button></div>
      <div class="view"><svg class="dial" width="192" height="180" viewBox="-97 -93 192 180"><g fill="none" stroke="#c8c6bc"><circle r="51" pathLength="500" stroke-width="6" stroke-dasharray="3 7" stroke-dashoffset="1.500" transform="rotate(-90)"/><circle r="55" pathLength="500" stroke-width="13" stroke-dasharray="3 47" stroke-dashoffset="1.500" transform="rotate(-90)"/><circle r="8" stroke="#fff" stroke-width="3"/></g><g class="lbl"><text y="-66">0</text><text x="41" y="-52">1</text><text x="70" y="-13">2</text><text x="70" y="30">3</text><text x="43" y="67">4</text><text y="82">5</text><text x="-42" y="67">6</text><text x="-69" y="30">7</text><text x="-70" y="-13">8</text><text x="-42" y="-52">9</text></g></svg></div></section>
    <section class="pane"><div class="cap"><i></i><button aria-label="Close">✕</button></div>
      <div class="view"><svg class="dial" width="192" height="174" viewBox="-97 -90 192 174"><g fill="none" stroke="#c8c6bc"><circle r="51" pathLength="600" stroke-width="4" stroke-dasharray="4 6" stroke-dashoffset="2"/><circle r="53" pathLength="600" stroke-width="9" stroke-dasharray="4 46" stroke-dashoffset="2"/><circle r="56" pathLength="600" stroke-width="14" stroke-dasharray="3 147" stroke-dashoffset="1.500"/></g><circle r="2" fill="#fff"/></svg></div></section>
  </div>
</main>

<footer class="status">
  <span class="ready">Ready</span>
  <span class="cell c1"><svg><use href="#i-plug"/></svg>NTRIP client: Not connected</span>
  <span class="cell c2"><svg><use href="#i-plug"/></svg>MQTT client: Not connected</span>
  <span class="cell c3">u-blox 6</span>
  <span class="cell c4"><svg><use href="#i-plug"/></svg>No port open</span>
  <span class="cell c5">No file open</span>
  <span class="cell c6"></span><span class="cell c6">00:00:23</span><span class="cell c6">UTC</span>
  <span class="cell c7"><svg viewBox="0 0 24 24"><circle cx="12" cy="11" r="10" fill="#8c8c8c"/><path d="M6 8l4 3-2 5M13 4l4 5 3 3" stroke="#bbb" fill="none"/></svg></span>
</footer>
</div>
</body>
</html>
```
FILE: styles.css
```css
* { box-sizing: border-box; }
body { margin: 0; background: #fff; color: #1c1a20; font: 24px/32px "Open Sans", "Noto Sans", sans-serif; }
button { border: 0; padding: 0; background: none; font: inherit; color: inherit; }
.sprite { position: absolute; width: 0; height: 0; }
.app { display: flex; flex-direction: column; min-height: 100vh; padding: 15px 5px 16px 13px; }

.title { display: flex; align-items: center; height: 48px; padding: 0 7px 0 4px; background: #f0f3f9; }
.logo { width: 34px; height: 34px; margin-right: 8px; }
.title h1 { margin: 0; font-size: 24px; font-weight: 400; }
.wctl { display: flex; margin-left: auto; }
.wctl button { display: flex; justify-content: center; align-items: center; width: 100px; height: 48px; }
.wctl svg { width: 24px; height: 24px; }

.menu { display: flex; align-items: center; gap: 30px; height: 45px; padding-left: 14px; border-bottom: 2px solid #9b9894; }
.menu a { color: inherit; text-decoration: none; }

.dock { display: flex; justify-content: space-between; align-items: flex-start; }
.dock-col { display: flex; flex-direction: column; align-items: flex-start; }
.dock-col.right { align-items: flex-end; }
.bar { display: flex; align-items: center; height: 64px; padding-right: 8px; background: #f2f2f2; border-right: 2px solid #b4b4b4; border-bottom: 2px solid #b4b4b4; }
.bar.last { height: 61px; border-bottom: 0; }
.right .bar { padding: 0 10px 0 3px; border-right: 0; border-left: 2px solid #b4b4b4; }
.bar button { display: flex; justify-content: center; align-items: center; width: 49px; height: 46px; }
.bar button svg { width: 32px; height: 32px; }
.bar button svg.tall { width: 32px; height: 36px; }
.bar button svg.tog { width: 30px; height: 31px; }
.bar button.drop { width: 32px; }
.bar button.drop svg { width: 15px; height: 9px; }
.bar button.on { background: #fff; border-top: 2px solid #a8a8a8; border-left: 2px solid #a8a8a8; }
.bar button.lit { background: #fff; border: 8px solid #f2f2f2; border-width: 4px 8px; }
.sep { width: 12px; height: 38px; background: linear-gradient(#b2b2b2, #b2b2b2) center / 2px 100% no-repeat; }
.grip { width: 20px; height: 36px; background: radial-gradient(circle, #8e8e8e 1px, transparent 2px) center / 20px 11px repeat-y; }
.seek { appearance: none; width: 602px; height: 32px; margin: 0 16px 0 18px; background: none; }
.seek::-webkit-slider-runnable-track { height: 28px; background: linear-gradient(#747474, #747474) 15px 11px / 100% 4px no-repeat; }
.seek::-webkit-slider-thumb { appearance: none; width: 16px; height: 28px; border-right: 3px solid #888; border-bottom: 3px solid #888; }

.work { flex: 1; display: flex; margin-left: 1px; border-top: 3px solid #c6c6c6; border-left: 2px solid #8c8c8c; border-bottom: 4px solid #c4c4c4; background: #fafbfb; }
.panes { display: grid; min-width: 0; }
.left { flex: 2155; grid-template-rows: 225fr 176fr 210fr 584fr 213fr; border-right: 2px solid #a8a8a8; }
.side { flex: 1108; grid-template-rows: 447fr 242fr 242fr 243fr 234fr; }
.pane { display: flex; flex-direction: column; min-height: 0; padding: 0 11px 9px 12px; border-bottom: 2px solid #bcbcbc; }
.left .pane { padding-left: 13px; }
.side .pane { padding-right: 14px; padding-left: 10px; }
.pane:last-child { border-bottom: 0; }
.cap { display: flex; align-items: center; height: 37px; background: linear-gradient(#f6f8f9, #fdfcfb); }
.cap i { flex: 1; height: 10px; border: solid #b0b0b0; border-width: 2px 1px 3px 0; background: #fff; }
.cap button { width: 25px; padding-left: 6px; font: 700 20px/20px "DejaVu Sans", sans-serif; color: #000; }
.view { flex: 1; display: flex; justify-content: center; align-items: center; min-height: 0; background: #000; box-shadow: 0 0 0 1px #a4a6a6; font: 22px/28px "Liberation Sans", Arial, sans-serif; color: #cfccc6; }
.dial { flex: none; }
.lbl { fill: #cdcbc4; font-size: 22px; text-anchor: middle; }

.map { flex-direction: column; align-items: stretch; }
.map svg { flex: 1; width: 100%; min-height: 0; }
.map dl { margin: 0; padding: 0 12px 9px 14px; }
.map dl div { display: flex; justify-content: space-between; }
.map dd { margin: 0; }
.coast path { fill: none; stroke: #b8b6b0; stroke-width: 2px; vector-effect: non-scaling-stroke; }
.strip svg { width: 100%; height: 100%; }
.noise path { fill: none; stroke: #a6a6a6; stroke-width: 2px; stroke-dasharray: 9 2 4 1 2 3 13 2 3 5 6 1; vector-effect: non-scaling-stroke; }
.noise .fine { stroke: #777; stroke-width: 2px; stroke-dasharray: 3 7 2 9; }
.noise .solid path { stroke: #e4e4e4; stroke-width: 3px; stroke-dasharray: 14 1 5 2 22 1 3 2; }

.data { align-items: flex-start; padding: 11px 10px 0 13px; }
.data table { width: 100%; height: 303px; border-spacing: 0; line-height: 24px; }
.data th { width: 129px; padding: 2px 0 0; font-weight: 400; text-align: left; white-space: nowrap; }
.data td { padding: 0; background: #404142; border-bottom: 3px solid #161616; color: #c41616; text-align: right; }
.data td.none { background: none; border: 0; }

.status { display: flex; height: 38px; background: #f5f6f6; padding: 4px 5px 0 4px; }
.ready { flex: 1; padding-top: 3px; }
.cell { display: flex; align-items: center; margin-left: 7px; padding-left: 5px; border-top: 2px solid #a0a0a0; border-left: 2px solid #a0a0a0; white-space: nowrap; }
.cell svg { width: 32px; height: 32px; margin-right: 8px; }
.c1 { width: 477px; }
.c2 { width: 479px; margin-left: 24px; }
.c3 { width: 244px; margin-left: 41px; }
.c4 { width: 223px; }
.c5 { width: 264px; margin-left: 8px; }
.c6 { width: 95px; padding-left: 2px; }
.c7 { width: 40px; }
.c7 svg { width: 22px; height: 24px; margin: 0; }
```
